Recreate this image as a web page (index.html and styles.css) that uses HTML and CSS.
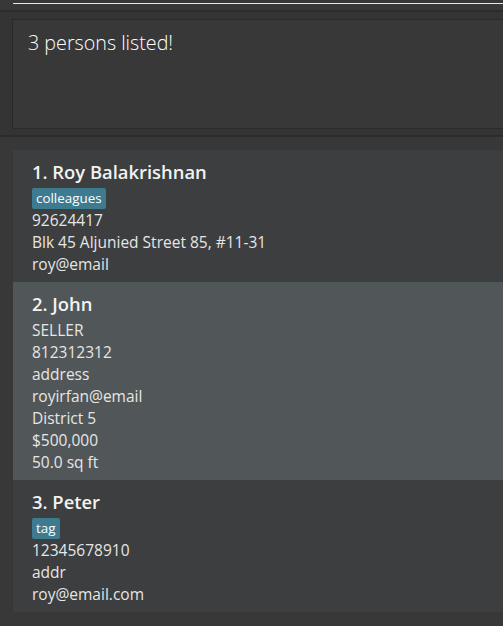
FILE: index.html
```html
<!DOCTYPE html>
<html>
<head>
<meta charset="utf-8">
<link rel="stylesheet" href="styles.css">
</head>
<body>
<div class="app">
  <div class="command-pane">
    <div class="command-field"></div>
  </div>
  <div class="result-pane">
    <div class="result-box">3 persons listed!</div>
  </div>
  <div class="list-pane">
    <div class="list">
      <div class="card even">
        <div class="name">1. Roy Balakrishnan</div>
        <div class="tags"><span class="tag">colleagues</span></div>
        <div class="line">92624417</div>
        <div class="line">Blk 45 Aljunied Street 85, #11-31</div>
        <div class="line">roy@email</div>
      </div>
      <div class="card odd">
        <div class="name">2. John</div>
        <div class="line">SELLER</div>
        <div class="line">812312312</div>
        <div class="line">address</div>
        <div class="line">royirfan@email</div>
        <div class="line">District 5</div>
        <div class="line">$500,000</div>
        <div class="line">50.0 sq ft</div>
      </div>
      <div class="card even">
        <div class="name">3. Peter</div>
        <div class="tags"><span class="tag">tag</span></div>
        <div class="line">12345678910</div>
        <div class="line">addr</div>
        <div class="line">roy@email.com</div>
      </div>
    </div>
  </div>
</div>
</body>
</html>
```
FILE: styles.css
```css
html, body {
  margin: 0;
  padding: 0;
  background: #383838;
  height: 100%;
  overflow: hidden;
}
.app {
  display: flex;
  flex-direction: column;
  height: 626px;
  font-family: "Open Sans", "Noto Sans", sans-serif;
}
.command-pane {
  height: 10px;
  padding-left: 13px;
  background: #383838;
  border-bottom: 2px solid #2c2c2c;
}
.command-field {
  height: 3px;
  border-bottom: 1px solid #e8e8e8;
}
.result-pane {
  height: 125px;
  padding: 7px 0 0 12px;
  box-sizing: border-box;
  background: #343434;
  border-bottom: 2px solid #2c2c2c;
}
.result-box {
  height: 110px;
  box-sizing: border-box;
  border: 1px solid #2a2a2a;
  border-right: none;
  background: #383838;
  padding: 10px 0 0 15px;
  color: #ffffff;
  font-weight: 300;
  font-size: 19.7px;
  line-height: 26px;
}
.list-pane {
  flex: 1;
  padding: 13px 0 0 13px;
  background: #383838;
}
.card {
  padding: 10px 0 7px 19px;
  color: #e6e6e6;
}
.card.even { background: #3c3e3f; }
.card.odd { background: #515658; }
.name {
  font-size: 18.4px;
  font-weight: 600;
  line-height: 24px;
  color: #f2f2f2;
  margin-bottom: 3px;
}
.tags {
  height: 22px;
  display: flex;
  align-items: center;
}
.tag {
  background: #3e7b91;
  color: #ffffff;
  font-size: 13.4px;
  line-height: 21px;
  height: 21px;
  padding: 0 4px;
  border-radius: 2px;
}
.line {
  font-size: 15.5px;
  line-height: 22px;
}
```
